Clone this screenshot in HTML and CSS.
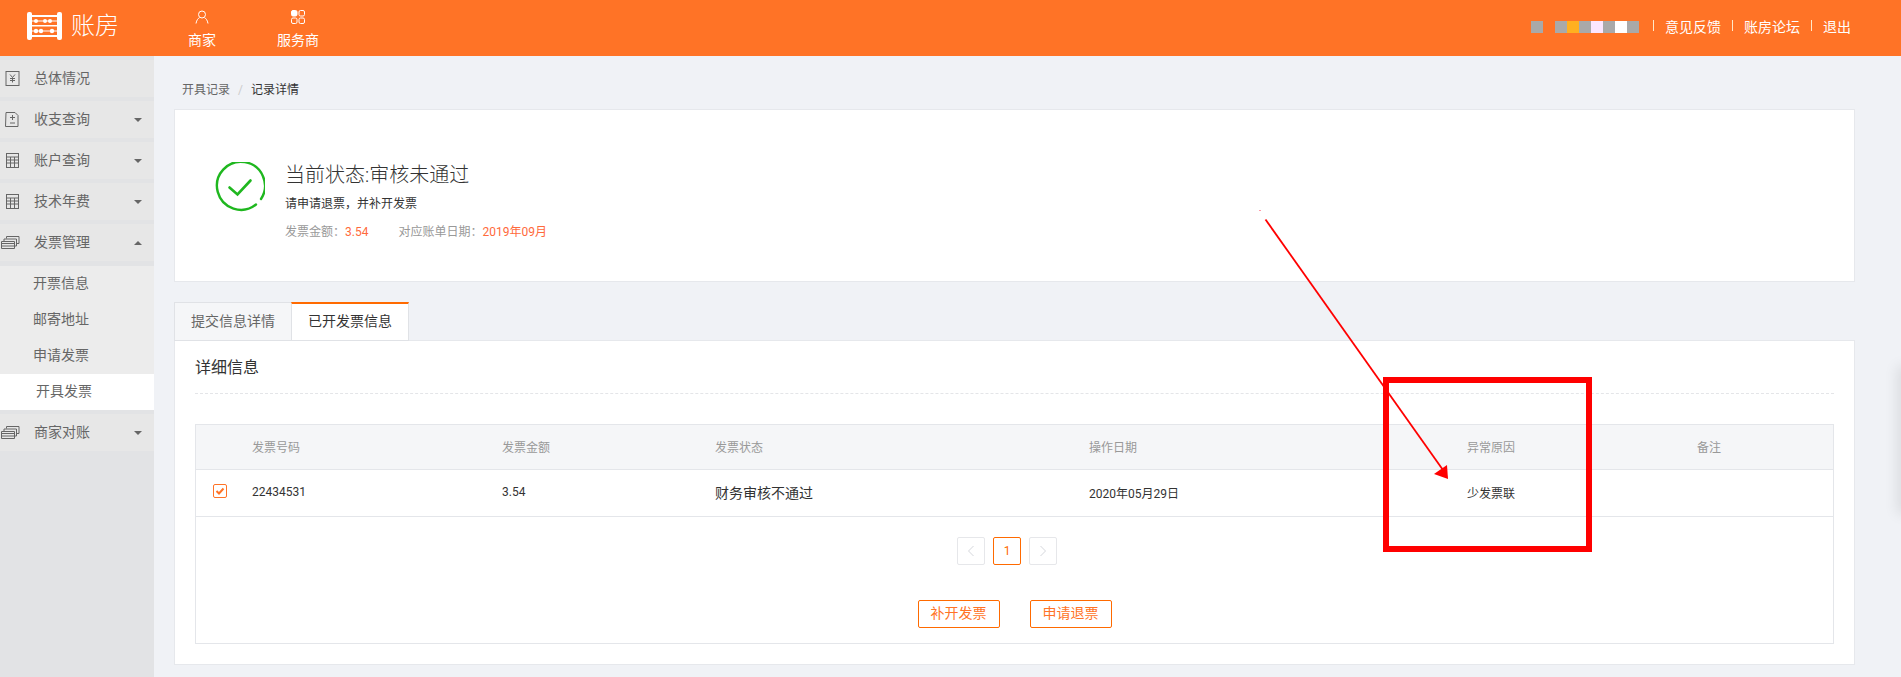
FILE: index.html
```html
<!DOCTYPE html>
<html lang="zh-CN">
<head>
<meta charset="utf-8">
<title>账房</title>
<link rel="stylesheet" href="styles.css">
</head>
<body>
<header class="topbar">
  <div class="logo">
    <svg class="logo-mark" width="35" height="28" viewBox="0 0 35 28">
      <g fill="#fff" stroke="none">
        <rect x="0" y="0" width="5" height="28" rx="2"/>
        <rect x="30" y="0" width="5" height="28" rx="2"/>
        <rect x="4" y="3" width="27" height="2"/>
        <rect x="4" y="13" width="27" height="1.500"/>
        <rect x="4" y="23" width="27" height="2"/>
        <rect x="4" y="8.500" width="27" height="1"/>
        <rect x="4" y="18.500" width="27" height="1"/>
        <circle cx="9" cy="9" r="2"/><circle cx="18" cy="9" r="2"/><circle cx="23" cy="9" r="2"/>
        <circle cx="9" cy="19" r="2.200"/><circle cx="14" cy="19" r="2.200"/><circle cx="25" cy="19" r="2.200"/>
      </g>
    </svg>
    <span class="logo-text">账房</span>
  </div>
  <nav class="topnav">
    <a class="topnav-item">
      <svg width="14" height="14" viewBox="0 0 14 14" fill="none" stroke="#fff"><circle cx="7" cy="4.500" r="3.500"/><path d="M1 13.500c.5-3.500 2.500-5.500 3.500-5.800M13 13.500c-.5-3.500-2.500-5.500-3.500-5.800"/></svg>
      <span>商家</span>
    </a>
    <a class="topnav-item">
      <svg width="14" height="14" viewBox="0 0 14 14" fill="none" stroke="#fff"><rect x=".5" y=".5" width="5.500" height="5.500" rx="1.500" fill="#fff"/><rect x="8" y=".5" width="5.500" height="5.500" rx="1.500"/><rect x=".5" y="8" width="5.500" height="5.500" rx="1.500"/><rect x="8" y="8" width="5.500" height="5.500" rx="1.500"/></svg>
      <span>服务商</span>
    </a>
  </nav>
  <div class="topright">
    <div class="mask">
      <i class="px gray"></i><i class="px blank"></i><i class="px gray"></i><i class="px amber"></i><i class="px gray"></i><i class="px pink"></i><i class="px gray"></i><i class="px white"></i><i class="px gray"></i>
    </div>
    <a class="toplink">意见反馈</a>
    <a class="toplink">账房论坛</a>
    <a class="toplink">退出</a>
  </div>
</header>

<div class="layout">
  <aside class="side">
    <div class="menu-item">
      <svg class="mi" width="17" height="17" viewBox="0 0 17 17" fill="none" stroke="#666"><rect x="4.500" y="1.500" width="13" height="14" transform="translate(-.500 0)"/><path d="M8 4.500l2.500 3 2.500-3M10.500 7.500v5M8 8.500h5M8 10.500h5"/></svg>
      <span class="mt">总体情况</span>
    </div>
    <div class="menu-item">
      <svg class="mi" width="17" height="17" viewBox="0 0 17 17" fill="none" stroke="#666"><path d="M4.500 1.500h9l3 3v11h-12.500z" transform="translate(-.500 0)"/><path d="M8 6.500h5M10.500 4v5M8 12h5"/></svg>
      <span class="mt">收支查询</span><i class="caret"></i>
    </div>
    <div class="menu-item">
      <svg class="mi" width="17" height="17" viewBox="0 0 17 17" fill="none" stroke="#666"><rect x="4.500" y="1.500" width="12" height="14"/><path d="M4.500 5h12M4.500 8h12M4.500 11h12M8.500 5v10M12.500 5v10"/></svg>
      <span class="mt">账户查询</span><i class="caret"></i>
    </div>
    <div class="menu-item">
      <svg class="mi" width="17" height="17" viewBox="0 0 17 17" fill="none" stroke="#666"><rect x="4.500" y="1.500" width="12" height="14"/><path d="M4.500 5h12M4.500 8h12M4.500 11h12M8.500 5v10M12.500 5v10"/></svg>
      <span class="mt">技术年费</span><i class="caret"></i>
    </div>
    <div class="menu-item">
      <svg class="mi" width="17" height="17" viewBox="0 0 17 17" fill="none" stroke="#666"><path d="M-.5 7.500h13v7h-13zM-.5 9.500h13M-.5 12h13M2 7V5h12.500v7h-2M4.500 4.500V2.500H17v7h-2.500"/></svg>
      <span class="mt">发票管理</span><i class="caret up"></i>
    </div>
    <ul class="submenu">
      <li class="sub">开票信息</li>
      <li class="sub">邮寄地址</li>
      <li class="sub">申请发票</li>
      <li class="sub active">开具发票</li>
    </ul>
    <div class="menu-item">
      <svg class="mi" width="17" height="17" viewBox="0 0 17 17" fill="none" stroke="#666"><path d="M-.5 7.500h13v7h-13zM-.5 9.500h13M-.5 12h13M2 7V5h12.500v7h-2M4.500 4.500V2.500H17v7h-2.500"/></svg>
      <span class="mt">商家对账</span><i class="caret"></i>
    </div>
  </aside>

  <main class="main">
    <div class="crumbs"><span>开具记录</span><span class="sep">/</span><span class="cur">记录详情</span></div>

    <section class="status">
      <svg class="status-icon" width="50" height="50" viewBox="0 0 50 50" fill="none" stroke="#1fb71f" stroke-width="2.400" stroke-linecap="round">
        <path d="M41 42.500A24 24 0 1 1 46 37"/>
        <path d="M14.500 25.500l8 7 13-14" stroke-width="2.600"/>
      </svg>
      <div class="status-body">
        <h1 class="status-title">当前状态:审核未通过</h1>
        <p class="status-desc">请申请退票，并补开发票</p>
        <p class="status-meta">
          <span class="meta-pair">发票金额：<b class="hot">3.54</b></span>
          <span class="meta-pair">对应账单日期：<b class="hot">2019年09月</b></span>
        </p>
      </div>
    </section>

    <div class="tabs">
      <a class="tab">提交信息详情</a>
      <a class="tab on">已开发票信息</a>
    </div>
    <section class="panel">
      <h2 class="panel-title">详细信息</h2>
      <div class="tbl-box">
        <table class="tbl">
          <colgroup>
            <col class="c0"><col class="c1"><col class="c2"><col class="c3"><col class="c4"><col class="c5"><col class="c6">
          </colgroup>
          <thead>
            <tr><th></th><th>发票号码</th><th>发票金额</th><th>发票状态</th><th>操作日期</th><th>异常原因</th><th>备注</th></tr>
          </thead>
          <tbody>
            <tr>
              <td class="chk-cell"><span class="chk"><svg width="10" height="10" viewBox="0 0 10 10" fill="none" stroke="#ff7326" stroke-width="2"><path d="M1.500 5l2.500 2.500 4.500-5"/></svg></span></td>
              <td>22434531</td><td>3.54</td><td class="big">财务审核不通过</td><td>2020年05月29日</td><td>少发票联</td><td></td>
            </tr>
          </tbody>
        </table>
        <div class="pager">
          <a class="pg off"><svg width="8" height="12" viewBox="0 0 8 12" fill="none" stroke="#d5d7dc"><path d="M6.500 1L1.500 6l5 5"/></svg></a>
          <a class="pg cur">1</a>
          <a class="pg off"><svg width="8" height="12" viewBox="0 0 8 12" fill="none" stroke="#d5d7dc"><path d="M1.500 1l5 5-5 5"/></svg></a>
        </div>
        <div class="actions">
          <a class="btn">补开发票</a>
          <a class="btn">申请退票</a>
        </div>
      </div>
    </section>
  </main>
</div>

<div class="edge-shadow"></div>
<svg class="markup" width="1901" height="677" viewBox="0 0 1901 677">
  <rect x="1386" y="380" width="203" height="169" fill="none" stroke="#ff0000" stroke-width="6"/>
  <line x1="1265.500" y1="219.500" x2="1443" y2="470" stroke="#ff0000" stroke-width="1.800"/>
  <polygon points="1448,479 1434,474 1447,465" fill="#ff0000"/>
  <rect x="1259" y="210" width="2" height="1" fill="#ff9aa8"/>
</svg>
</body>
</html>
```

FILE: styles.css
```css
* { box-sizing: border-box; }
html, body { margin: 0; padding: 0; }
body {
  position: relative;
  width: 1901px;
  height: 677px;
  overflow: hidden;
  background: #f0f2f6;
  font-family: Roboto, "Noto Sans CJK SC", sans-serif;
  font-size: 12px;
  color: #333;
}
a { color: inherit; text-decoration: none; }
h1, h2, p, ul { margin: 0; padding: 0; font-weight: 400; }
ul { list-style: none; }

/* top bar */
.topbar {
  display: flex;
  align-items: flex-start;
  height: 56px;
  background: #ff7326;
  color: #fff;
}
.logo { display: flex; align-items: center; height: 52px; padding-left: 27px; width: 188px; }
.logo-text { margin-left: 9px; font-size: 24px; font-weight: 300; line-height: 32px; }
.topnav { display: flex; gap: 61px; }
.topnav-item {
  display: flex;
  flex-direction: column;
  align-items: center;
  padding-top: 10px;
  font-size: 14px;
  line-height: 20px;
}
.topnav-item svg { margin-bottom: 6px; }
.topright {
  display: flex;
  align-items: center;
  height: 54px;
  margin-left: auto;
  padding-right: 50px;
  font-size: 14px;
}
.mask { display: flex; margin-right: 14px; }
.px { display: block; width: 12px; height: 12px; }
.gray { background: #a9a9a9; }
.blank { background: transparent; }
.amber { background: #ffb020; }
.pink { background: #fbe6ff; }
.white { background: #fff; }
.toplink {
  padding-left: 12px;
  margin-right: 11px;
  line-height: 20px;
  position: relative;
}
.toplink:last-child { margin-right: 0; }
.toplink::before {
  content: "";
  position: absolute;
  left: 0;
  top: 3px;
  width: 1px;
  height: 11px;
  background: #ffe9c9;
}

/* page frame */
.layout { display: flex; height: 621px; }
.side {
  flex: none;
  width: 154px;
  padding-top: 4px;
  background: #e2e3e5;
  color: #666;
  font-size: 14px;
}
.menu-item {
  display: flex;
  align-items: center;
  height: 37px;
  margin-bottom: 4px;
  background: #e7e7e7;
}
.mi { flex: none; margin-left: 2px; overflow: visible; }
.mt { margin-left: 15px; line-height: 18px; padding-bottom: 2px; height: 20px; }
.caret {
  margin-left: auto;
  margin-right: 12px;
  width: 0;
  height: 0;
  border-left: 4px solid transparent;
  border-right: 4px solid transparent;
  border-top: 4px solid #666;
}
.caret.up { border-top: 0; border-bottom: 4px solid #666; }
.submenu { margin-top: 5px; margin-bottom: 4px; background: #ececec; }
.sub { height: 36px; padding-left: 33px; line-height: 34px; }
.sub.active { padding-left: 36px; background: #fff; }

/* main */
.main { flex: 1; min-width: 0; padding: 0 46px 0 20px; }
.crumbs { padding: 25px 0 0 8px; height: 53px; line-height: 18px; color: #666; }
.sep { margin: 0 8px; color: #ccc; }
.cur { color: #333; }

.status {
  display: flex;
  align-items: flex-start;
  height: 173px;
  background: #fff;
  border: 1px solid #e6e8ec;
  padding: 52px 0 0 40px;
}
.status-icon { flex: none; }
.status-body { margin: -1px 0 0 20px; }
.status-title { font-size: 20px; line-height: 28px; color: #333; font-weight: 300; }
.status-desc { margin-top: 6px; line-height: 18px; }
.status-meta { margin-top: 10px; line-height: 18px; color: #999; display: flex; gap: 30px; }
.hot { font-weight: 400; color: #ff6a3c; }

.tabs { display: flex; margin-top: 20px; height: 39px; }
.tab {
  width: 117px;
  height: 39px;
  padding-top: 1px;
  font-size: 14px;
  line-height: 35px;
  text-align: center;
  color: #666;
  background: #f5f6f8;
  border: 1px solid #e0e2e6;
  border-right: 0;
}
.tab.on {
  width: 118px;
  color: #333;
  background: #fff;
  border-top: 2px solid #ff6a00;
  border-right: 1px solid #e0e2e6;
  padding-top: 0;
}
.panel {
  margin-top: -1px;
  padding: 16px 20px 20px;
  background: #fff;
  border: 1px solid #e6e8ec;
  height: 325px;
}
.panel-title {
  padding-bottom: 12px;
  font-size: 16px;
  line-height: 22px;
  height: 37px;
  border-bottom: 1px dashed #e4e5e8;
}
.tbl-box { margin-top: 30px; border: 1px solid #e4e6ea; height: 220px; }
.tbl { width: 100%; table-layout: fixed; border-collapse: collapse; }
.c0 { width: 55px; }
.c1 { width: 250px; }
.c2 { width: 213px; }
.c3 { width: 374px; }
.c4 { width: 378px; }
.c5 { width: 230px; }
.tbl th {
  height: 44px;
  padding-bottom: 2px;
  font-weight: 400;
  text-align: left;
  color: #999;
  background: #f5f6f8;
  border-bottom: 1px solid #e4e6ea;
}
.tbl td { height: 47px; padding-bottom: 2px; text-align: left; color: #333; border-bottom: 1px solid #e4e6ea; }
.tbl td.big { font-size: 14px; }
.chk-cell { padding-left: 17px; }
.chk {
  display: flex;
  align-items: center;
  justify-content: center;
  width: 14px;
  height: 14px;
  margin-top: -2px;
  border: 1px solid #ff7326;
  border-radius: 2px;
}
.pager { display: flex; justify-content: center; gap: 8px; margin-top: 20px; padding-right: 15px; }
.pg {
  display: flex;
  align-items: center;
  justify-content: center;
  width: 28px;
  height: 28px;
  border: 1px solid #e6e7ea;
  border-radius: 2px;
}
.pg.cur { border-color: #ff6a00; color: #ff6a00; }
.actions { display: flex; justify-content: center; gap: 30px; margin-top: 35px; }
.btn {
  width: 82px;
  height: 28px;
  font-size: 14px;
  line-height: 25px;
  text-align: center;
  color: #ff7326;
  border: 1px solid #ff6a00;
  border-radius: 2px;
}

/* overlays */
.edge-shadow {
  position: absolute;
  right: -12px;
  top: 370px;
  width: 12px;
  height: 140px;
  box-shadow: 0 0 14px 4px rgba(0, 0, 0, .09);
}
.markup { position: absolute; left: 0; top: 0; pointer-events: none; }
```
